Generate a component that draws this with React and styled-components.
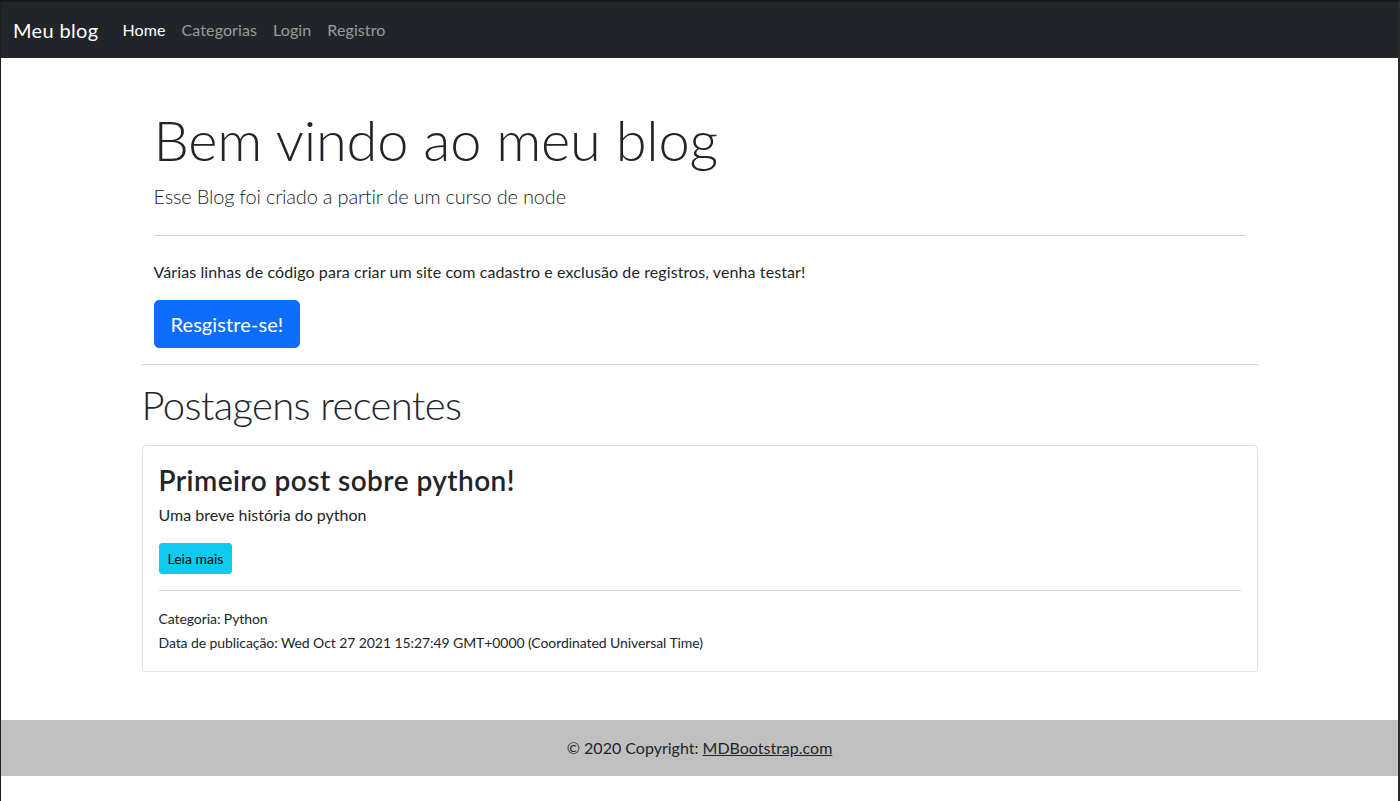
import React from 'react'
import styled, { createGlobalStyle } from 'styled-components'

const GlobalStyle = createGlobalStyle`
  html, body {
    margin: 0;
    padding: 0;
    background: #ffffff;
  }
  body {
    font-family: Lato, "Noto Sans", "Liberation Sans", sans-serif;
    font-size: 16px;
    line-height: 1.5;
    color: #212529;
  }
  *, *::before, *::after {
    box-sizing: border-box;
  }
`

const Frame = styled.div`
  min-height: 100vh;
  border-top: 2px solid #18181a;
  border-left: 1px solid #1c1c1c;
  border-right: 2px solid #2b2b2b;
  display: flex;
  flex-direction: column;
`

const Navbar = styled.nav`
  background: #212529;
  height: 56px;
  padding: 0 12px;
  display: flex;
  align-items: center;
`

const Brand = styled.a`
  font-size: 20px;
  color: #ffffff;
  text-decoration: none;
  margin-right: 16px;
  line-height: 30px;
  letter-spacing: 0.35px;
`

const NavList = styled.div`
  display: flex;
`

const NavLink = styled.a`
  padding: 8px;
  font-size: 16px;
  text-decoration: none;
  letter-spacing: 0.1px;
  color: ${({ $active }) => ($active ? '#ffffff' : 'rgba(255, 255, 255, 0.55)')};
`

const Container = styled.main`
  width: 1140px;
  max-width: 100%;
  margin: 0 auto;
  padding: 0 12px;
  flex: 1;
`

const Hero = styled.section`
  padding: 48px 12px 0;
`

const HeroTitle = styled.h1`
  margin: 0 0 8px;
  font-size: 56px;
  font-weight: 300;
  line-height: 1.2;
  letter-spacing: -0.2px;
`

const Lead = styled.p`
  margin: 0;
  font-size: 20px;
  font-weight: 300;
  line-height: 30px;
  letter-spacing: -0.2px;
`

const Divider = styled.hr`
  margin: ${({ $space }) => $space || '16px 0'};
  border: 0;
  border-top: 1px solid #d3d4d5;
`

const Text = styled.p`
  margin: 0 0 16px;
  letter-spacing: ${({ $spacing }) => $spacing || 'normal'};
`

const BigButton = styled.a`
  display: inline-block;
  padding: 8px 16px;
  font-size: 20px;
  line-height: 30px;
  color: #ffffff;
  background: #0d6efd;
  border: 1px solid #0d6efd;
  border-radius: 5px;
  text-decoration: none;
  letter-spacing: 0.1px;
`

const SectionTitle = styled.h2`
  margin: 0 0 16px;
  font-size: 40px;
  font-weight: 300;
  line-height: 1.2;
  letter-spacing: -0.65px;
`

const Card = styled.article`
  border: 1px solid rgba(0, 0, 0, 0.125);
  border-radius: 4px;
  padding: 16px;
`

const CardTitle = styled.h3`
  margin: 0 0 5px;
  padding-top: 2px;
  font-size: 28px;
  font-weight: 600;
  line-height: 1.2;
  letter-spacing: 0.45px;
`

const SmallButton = styled.a`
  display: inline-block;
  padding: 4px 8px;
  font-size: 14px;
  line-height: 21px;
  color: #000000;
  background: #0dcaf0;
  border: 1px solid #0dcaf0;
  border-radius: 3px;
  text-decoration: none;
`

const Meta = styled.p`
  margin: 0;
  font-size: 14px;
  line-height: 24px;
  letter-spacing: -0.08px;
`

const Footer = styled.footer`
  margin-top: 48px;
  background: #c0c0c0;
  padding: 16px;
  text-align: center;
  line-height: 24px;
`

const FooterLink = styled.a`
  color: #212529;
`

const BottomSpace = styled.div`
  height: 25px;
`

export default function App() {
  return (
    <>
      <GlobalStyle />
      <Frame>
        <Navbar>
          <Brand href='#'>Meu blog</Brand>
          <NavList>
            <NavLink $active href='#'>Home</NavLink>
            <NavLink href='#'>Categorias</NavLink>
            <NavLink href='#'>Login</NavLink>
            <NavLink href='#'>Registro</NavLink>
          </NavList>
        </Navbar>
        <Container>
          <Hero>
            <HeroTitle>Bem vindo ao meu blog</HeroTitle>
            <Lead>Esse Blog foi criado a partir de um curso de node</Lead>
            <Divider $space='24px 0' />
            <Text $spacing='0.1px'>
              Várias linhas de código para criar um site com cadastro e exclusão
              de registros, venha testar!
            </Text>
            <Text>
              <BigButton href='#'>Resgistre-se!</BigButton>
            </Text>
          </Hero>
          <Divider $space='0 0 16px' />
          <SectionTitle>Postagens recentes</SectionTitle>
          <Card>
            <CardTitle>Primeiro post sobre python!</CardTitle>
            <Text>Uma breve história do python</Text>
            <SmallButton href='#'>Leia mais</SmallButton>
            <Divider />
            <Meta>
              Categoria: Python
              <br />
              Data de publicação: Wed Oct 27 2021 15:27:49 GMT+0000 (Coordinated
              Universal Time)
            </Meta>
          </Card>
        </Container>
        <Footer>
          © 2020 Copyright: <FooterLink href='#'>MDBootstrap.com</FooterLink>
        </Footer>
        <BottomSpace />
      </Frame>
    </>
  )
}
